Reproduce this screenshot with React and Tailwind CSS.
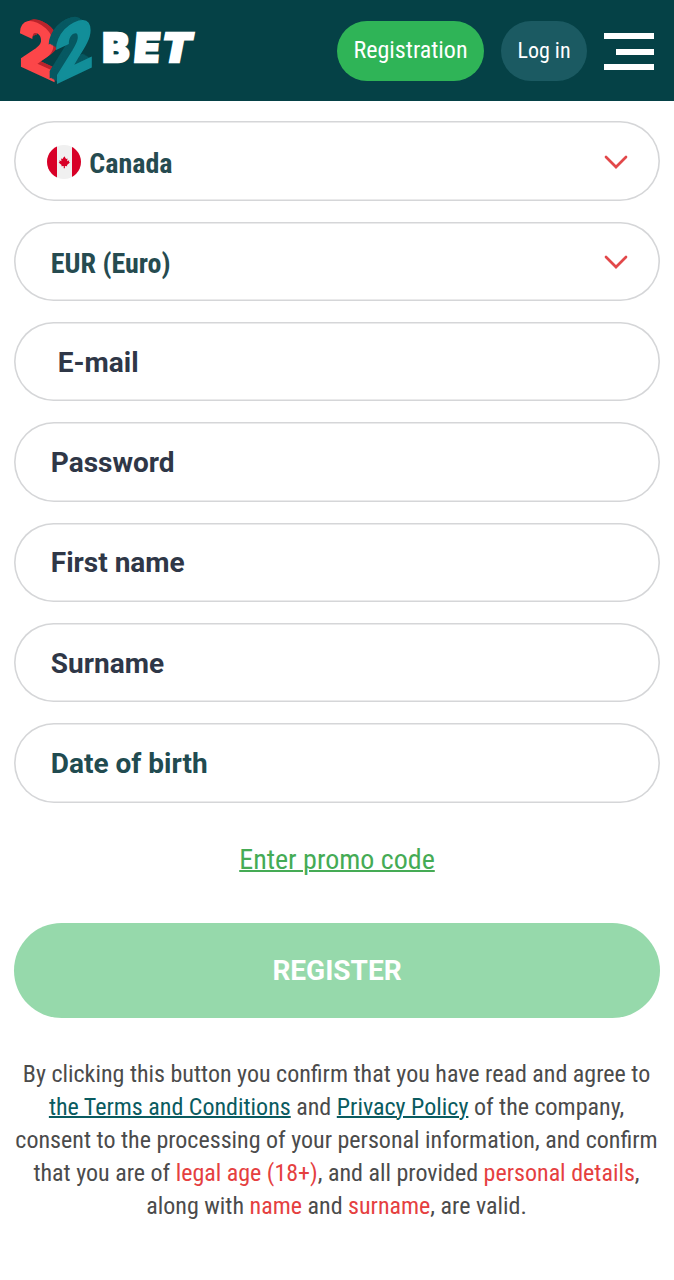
const inputs = ['Password', 'First name', 'Surname'];

function Logo() {
  return (
    <div className="relative h-[101px] w-[220px] shrink-0 font-['Roboto'] text-[73px] leading-[90px] font-black [font-stretch:100%]">
      <span className="absolute left-[19px] top-[-5px] origin-[0_71px] text-[#fc4649] [-webkit-text-stroke:2px_#fc4649] [transform:matrix(0.88,0.4,0,0.94,0,0)] [text-shadow:1px_-1px_#b9252d,2px_-2px_#b9252d,3px_-3px_#b9252d,4px_-4px_#b9252d,5px_-5px_#b9252d,6px_-5px_#b9252d]">2</span>
      <span className="absolute left-[55px] top-[14px] origin-[0_71px] text-[#128e99] [-webkit-text-stroke:2px_#128e99] [transform:matrix(0.91,-0.43,0,0.98,0,0)] [text-shadow:-1px_-1px_#075962,-2px_-2px_#075962,-3px_-3px_#075962,-4px_-4px_#075962,-5px_-5px_#075962,-6px_-6px_#075962,-7px_-7px_#075962,-8px_-8px_#075962,-9px_-8px_#075962]">2</span>
      <svg className="absolute left-[98px] top-[22px] h-[50px] w-[104px]" viewBox="0 0 104 50" fontSize="40" fontFamily="Inter" fontWeight="900" fill="#fff" stroke="#fff" strokeWidth="2.4">
        <text transform="translate(4.6 40)">B</text>
        <text transform="translate(35.2 40) skewX(-5) scale(1.04 1)">E</text>
        <text transform="translate(61.5 40) skewX(-11) scale(1.08 1)">T</text>
      </svg>
    </div>
  );
}

function Flag() {
  return (
    <svg className="mr-[8.5px] -ml-[4px] mt-[2px] h-[34px] w-[34px]" viewBox="0 0 34 34">
      <defs>
        <clipPath id="round"><circle cx="17" cy="17" r="17" /></clipPath>
      </defs>
      <g clipPath="url(#round)">
        <rect width="34" height="34" fill="#f0f0f0" />
        <rect width="10" height="34" fill="#d80027" />
        <rect x="25" width="9" height="34" fill="#d80027" />
        <path fill="#d80027" d="M17.3 11.2l1.8 2.8 1.4-.6-.3 2.8 2-.9-.2 1.7 1 .6-3 2.5.2 1.1-2.3-.2v2.2h-1.2v-2.2l-2.3.2.2-1.1-3-2.5 1-.6-.2-1.7 2 .9-.3-2.8 1.4.6z" />
      </g>
    </svg>
  );
}

function Chevron() {
  return (
    <svg className="mt-[2px] h-[16px] w-[26px]" viewBox="0 0 26 16" fill="none" stroke="#e2484a" strokeWidth="2.7" strokeLinecap="round">
      <path d="M3 3 L13 13 L23 3" strokeLinejoin="miter" />
    </svg>
  );
}

function Field({ children }) {
  return (
    <div className="flex h-[79.5px] shrink-0 items-center rounded-full pr-[31px] pl-[36.8px] text-[28px] leading-[30px] font-bold text-[#2f3747] shadow-[inset_0_0_0_1.6px_#d5d6d8]">
      {children}
    </div>
  );
}

export default function App() {
  return (
    <div className="min-h-[1280px] bg-white font-['Roboto',sans-serif] [font-stretch:75%]">
      <header className="flex h-[101px] items-center bg-[#054146]">
        <Logo />
        <button className="ml-[117px] h-[60px] w-[147px] rounded-full bg-[#2fb457] pb-[2px] text-[24px] text-white">Registration</button>
        <button className="ml-[17px] h-[60px] w-[86px] rounded-full bg-[#1b5a62] text-[22px] text-white">Log in</button>
        <div className="mt-[2px] ml-[17px] flex w-[50px] flex-col items-end gap-[9.5px]">
          <span className="h-[6px] w-full bg-white" />
          <span className="h-[6px] w-[38px] bg-white" />
          <span className="h-[6px] w-full bg-white" />
        </div>
      </header>
      <form className="flex flex-col gap-[20.83px] px-[14px] pt-[20.3px]">
        <Field>
          <span className="flex grow items-center text-[#264b50]">
            <Flag />
            <span className="pt-[6px]">Canada</span>
          </span>
          <Chevron />
        </Field>
        <Field>
          <span className="grow pt-[6px] text-[#264b50]">EUR (Euro)</span>
          <Chevron />
        </Field>
        <Field>
          <span className="pt-[2.6px] pl-[7px] [font-stretch:100%]">E-mail</span>
        </Field>
        {inputs.map((label) => (
          <Field key={label}>
            <span className="pt-[2.2px] [font-stretch:100%]">{label}</span>
          </Field>
        ))}
        <Field>
          <span className="pt-[2px] text-[#214b50] [font-stretch:100%]">Date of birth</span>
        </Field>
      </form>
      <div className="flex flex-col items-center px-[14px]">
        <a className="mt-[40.2px] text-[28px] leading-[34px] text-[#45ab55] underline decoration-[1.5px]">Enter promo code</a>
        <button className="mt-[46px] h-[95px] w-full rounded-full bg-[#96d9ab] pt-[2px] text-[28px] font-bold text-white [font-stretch:100%]">REGISTER</button>
      </div>
      <p className="mt-[40.2px] mr-px text-center text-[24px] leading-[33px] text-[#4b4b4b]">
        By clicking this button you confirm that you have read and agree to<br />
        <a className="text-[#0a5b60] underline decoration-[1.5px]">the Terms and Conditions</a> and <a className="text-[#0a5b60] underline decoration-[1.5px]">Privacy Policy</a> of the company,<br />
        consent to the processing of your personal information, and confirm<br />
        that you are of <span className="text-[#e5403f]">legal age (18+)</span>, and all provided <span className="text-[#e5403f]">personal details</span>,<br />
        along with <span className="text-[#e5403f]">name</span> and <span className="text-[#e5403f]">surname</span>, are valid.
      </p>
    </div>
  );
}
